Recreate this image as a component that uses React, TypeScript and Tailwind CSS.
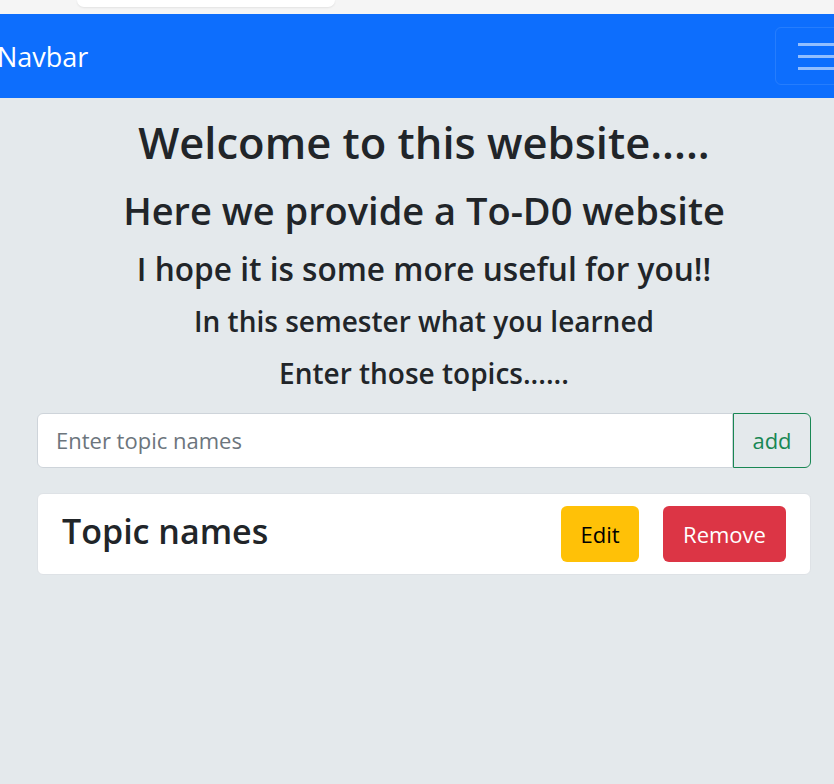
export default function App() {
  return (
    <div
      className="min-h-[784px] bg-[#e4e9ec] text-[#212529]"
      style={{ fontFamily: '"Open Sans", "Noto Sans", sans-serif' }}
    >
      {/* browser strip */}
      <div className="h-[14px] bg-[#f5f5f5]">
        <div className="ml-[77px] h-[7px] w-[258px] rounded-b-[14px] bg-white shadow-[0_1px_2px_rgba(0,0,0,0.08)]" />
      </div>

      <nav className="flex h-[84px] items-center justify-between overflow-hidden bg-[#0d6efd]">
        <span className="ml-[-3px] whitespace-nowrap text-[27px] leading-none text-white">Navbar</span>
        <button className="mr-[-60px] flex h-[58px] w-[119px] flex-col justify-center gap-[9px] rounded-[6px] border border-white/10 pl-[22px]">
          <span className="block h-[3px] w-[60px] bg-white/55" />
          <span className="block h-[3px] w-[60px] bg-white/55" />
          <span className="block h-[3px] w-[60px] bg-white/55" />
        </button>
      </nav>

      <main className="ml-[37px] mr-[23px] text-center">
        <h1 className="pt-[21px] text-[43.5px] font-semibold leading-[48px]">Welcome to this website.....</h1>
        <h2 className="mt-[21px] text-[38px] font-semibold leading-[44px]">Here we provide a To-D0 website</h2>
        <h3 className="mt-[18px] text-[31.6px] font-semibold leading-[38px]">I hope it is some more useful for you!!</h3>
        <h4 className="mt-[16px] text-[28px] font-semibold leading-[34px]">In this semester what you learned</h4>
        <h5 className="mt-[19px] text-[28px] font-semibold leading-[32px]">Enter those topics......</h5>

        <div className="mt-[24px] flex h-[55px]">
          <input
            className="min-w-0 flex-1 rounded-l-[6px] border border-[#ced4da] bg-white pl-[18px] text-[22px] text-[#212529] outline-none placeholder:text-[#6c757d]"
            placeholder="Enter topic names"
          />
          <button className="w-[78px] rounded-r-[6px] border border-[#198754] text-[22px] text-[#198754]">add</button>
        </div>

        <div className="mt-[25px] flex items-center rounded-[6px] border border-[#dee2e6] bg-white pb-[12px] pl-[24px] pr-[24px] pt-[12px]">
          <span className="mb-[7px] flex-1 text-left text-[34px] font-semibold leading-[44px]">Topic names</span>
          <button className="h-[56px] w-[78px] rounded-[6px] bg-[#ffc107] text-[22px] text-black">Edit</button>
          <button className="ml-[24px] h-[56px] w-[123px] rounded-[6px] bg-[#dc3545] text-[22px] text-white">Remove</button>
        </div>
      </main>
    </div>
  );
}
